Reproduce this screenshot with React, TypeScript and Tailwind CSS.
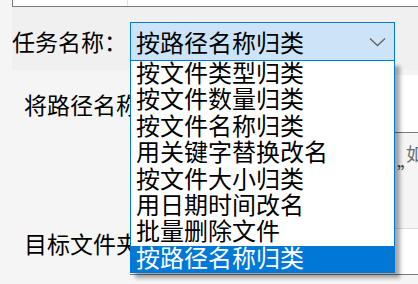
const options = [
  '按文件类型归类',
  '按文件数量归类',
  '按文件名称归类',
  '用关键字替换改名',
  '按文件大小归类',
  '用日期时间改名',
  '批量删除文件',
  '按路径名称归类',
];

const selected = '按路径名称归类';

function Chevron() {
  return (
    <svg width="17" height="10" viewBox="0 0 17 10" fill="none">
      <path d="M1 1.5 L8.5 8.5 L16 1.5" stroke="#616161" strokeWidth="1.3" />
    </svg>
  );
}

export default function App() {
  return (
    <div className="relative w-[418px] h-[284px] overflow-hidden bg-[#f5f5f5] text-black font-['Noto_Sans_CJK_SC',sans-serif]">
      {/* list header strip at the top */}
      <div className="ml-[12px] h-[7px] flex bg-white border-l border-b border-[#7a7a7a]">
        <div className="w-[115px] border-r border-[#e3e3e3]" />
      </div>

      {/* task row */}
      <div className="ml-[12px] h-[63px] bg-[#f0f0f0] flex items-start pt-[15px]">
        <span className="w-[118px] text-[23px] leading-[39px] whitespace-nowrap">任务名称：</span>
        <div className="w-[265px] h-[39px] border border-[#0078d7] bg-[#cce4f7] flex items-center justify-between pl-[5px] pr-[8px]">
          <span className="text-[24px] leading-[26px] whitespace-nowrap">{selected}</span>
          <Chevron />
        </div>
      </div>

      {/* form behind the open list (labels are cut where the list starts) */}
      <div className="flex">
        <div className="w-[130px] shrink-0 overflow-hidden pl-[24px] text-[23px] leading-[23px] whitespace-nowrap">
          <div className="mt-[23px]">将路径名称</div>
          <div className="mt-[116px]">目标文件夹</div>
        </div>
        <div className="w-[300px] shrink-0">
          <div className="mt-[5px] h-[58px] bg-white border-b border-[#7a7a7a]" />
          <div className="h-[95px] pt-[10px] text-[18px] leading-[20px] text-[#6d6d6d] whitespace-nowrap">
            <div className="pl-[276px]">如</div>
            <div className="pl-[267px] text-[#444]">”</div>
          </div>
          <div className="h-[47px] bg-white border-t border-[#dcdcdc] border-b border-b-[#7a7a7a]" />
        </div>
      </div>

      {/* open dropdown */}
      <div className="absolute left-[130px] top-[61px] w-[265px] bg-white border border-t-0 border-[#0078d7] shadow-[5px_5px_4px_rgba(0,0,0,0.35)]">
        {options.map((o) => (
          <div
            key={o}
            className={`h-[26.4px] pl-[5px] text-[24px] leading-[22px] whitespace-nowrap ${
              o === selected ? 'bg-[#0078d7] text-white' : ''
            }`}
          >
            {o}
          </div>
        ))}
      </div>
    </div>
  );
}
